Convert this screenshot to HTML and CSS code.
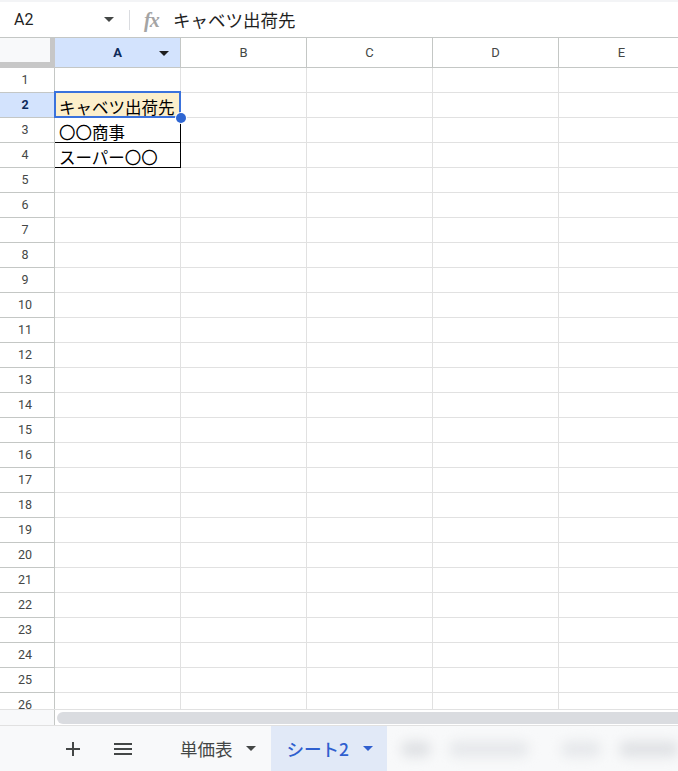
FILE: index.html
```html
<!DOCTYPE html>
<html lang="ja">
<head>
<meta charset="utf-8">
<title>Sheet</title>
<link rel="stylesheet" href="styles.css">
</head>
<body>
<div class="app">
  <div class="topline"></div>
  <div class="formula-bar">
    <div class="namebox">
      <span class="ref">A2</span>
      <svg class="caret" width="10" height="5" viewBox="0 0 10 5"><path d="M0 0h10L5 5z"/></svg>
    </div>
    <div class="sep"></div>
    <span class="fx">fx</span>
    <span class="ftext">キャベツ出荷先</span>
  </div>

  <div class="grid-wrap">
    <div class="sheet">
      <div class="corner"></div>
      <div class="ch sel">A<svg class="col-caret" width="10" height="5" viewBox="0 0 10 5"><path d="M0 0h10L5 5z"/></svg></div>
      <div class="ch">B</div>
      <div class="ch">C</div>
      <div class="ch">D</div>
      <div class="ch">E</div>

      <div class="rh">1</div><div class="c"></div><div class="c"></div><div class="c"></div><div class="c"></div><div class="c"></div>
      <div class="rh sel">2</div><div class="c boxed active">キャベツ出荷先</div><div class="c"></div><div class="c"></div><div class="c"></div><div class="c"></div>
      <div class="rh">3</div><div class="c boxed">〇〇商事</div><div class="c"></div><div class="c"></div><div class="c"></div><div class="c"></div>
      <div class="rh">4</div><div class="c boxed">スーパー〇〇</div><div class="c"></div><div class="c"></div><div class="c"></div><div class="c"></div>
      <div class="rh">5</div><div class="c"></div><div class="c"></div><div class="c"></div><div class="c"></div><div class="c"></div>
      <div class="rh">6</div><div class="c"></div><div class="c"></div><div class="c"></div><div class="c"></div><div class="c"></div>
      <div class="rh">7</div><div class="c"></div><div class="c"></div><div class="c"></div><div class="c"></div><div class="c"></div>
      <div class="rh">8</div><div class="c"></div><div class="c"></div><div class="c"></div><div class="c"></div><div class="c"></div>
      <div class="rh">9</div><div class="c"></div><div class="c"></div><div class="c"></div><div class="c"></div><div class="c"></div>
      <div class="rh">10</div><div class="c"></div><div class="c"></div><div class="c"></div><div class="c"></div><div class="c"></div>
      <div class="rh">11</div><div class="c"></div><div class="c"></div><div class="c"></div><div class="c"></div><div class="c"></div>
      <div class="rh">12</div><div class="c"></div><div class="c"></div><div class="c"></div><div class="c"></div><div class="c"></div>
      <div class="rh">13</div><div class="c"></div><div class="c"></div><div class="c"></div><div class="c"></div><div class="c"></div>
      <div class="rh">14</div><div class="c"></div><div class="c"></div><div class="c"></div><div class="c"></div><div class="c"></div>
      <div class="rh">15</div><div class="c"></div><div class="c"></div><div class="c"></div><div class="c"></div><div class="c"></div>
      <div class="rh">16</div><div class="c"></div><div class="c"></div><div class="c"></div><div class="c"></div><div class="c"></div>
      <div class="rh">17</div><div class="c"></div><div class="c"></div><div class="c"></div><div class="c"></div><div class="c"></div>
      <div class="rh">18</div><div class="c"></div><div class="c"></div><div class="c"></div><div class="c"></div><div class="c"></div>
      <div class="rh">19</div><div class="c"></div><div class="c"></div><div class="c"></div><div class="c"></div><div class="c"></div>
      <div class="rh">20</div><div class="c"></div><div class="c"></div><div class="c"></div><div class="c"></div><div class="c"></div>
      <div class="rh">21</div><div class="c"></div><div class="c"></div><div class="c"></div><div class="c"></div><div class="c"></div>
      <div class="rh">22</div><div class="c"></div><div class="c"></div><div class="c"></div><div class="c"></div><div class="c"></div>
      <div class="rh">23</div><div class="c"></div><div class="c"></div><div class="c"></div><div class="c"></div><div class="c"></div>
      <div class="rh">24</div><div class="c"></div><div class="c"></div><div class="c"></div><div class="c"></div><div class="c"></div>
      <div class="rh">25</div><div class="c"></div><div class="c"></div><div class="c"></div><div class="c"></div><div class="c"></div>
      <div class="rh last">26</div><div class="c"></div><div class="c"></div><div class="c"></div><div class="c"></div><div class="c"></div>
    </div>
  </div>

  <div class="hscroll">
    <div class="hs-left"></div>
    <div class="thumb"></div>
  </div>

  <div class="sheetbar">
    <div class="icon-btn plus">
      <svg width="14" height="14" viewBox="0 0 14 14"><path d="M7 0v14M0 7h14" stroke="#444746" stroke-width="2"/></svg>
    </div>
    <div class="icon-btn menu">
      <svg width="18" height="12" viewBox="0 0 18 12"><path d="M0 1h18M0 6h18M0 11h18" stroke="#444746" stroke-width="2"/></svg>
    </div>
    <div class="tab first">
      <span class="tab-name">単価表</span>
      <svg class="tab-caret" width="10" height="5" viewBox="0 0 10 5"><path d="M0 0h10L5 5z"/></svg>
    </div>
    <div class="tab active">
      <span class="tab-name">シート2</span>
      <svg class="tab-caret" width="10" height="5" viewBox="0 0 10 5"><path d="M0 0h10L5 5z"/></svg>
    </div>
    <div class="blurred">
      <span class="blob b1"></span>
      <span class="blob b2"></span>
      <span class="blob b3"></span>
      <span class="blob b4"></span>
    </div>
  </div>
</div>
</body>
</html>
```

FILE: styles.css
```css
* { box-sizing: border-box; }

html, body {
  margin: 0;
  padding: 0;
  background: #ffffff;
}

body {
  width: 678px;
  height: 771px;
  overflow: hidden;
  font-family: "Roboto", "Liberation Sans", "Noto Sans CJK JP", sans-serif;
  color: #1f1f1f;
}

.app {
  display: flex;
  flex-direction: column;
  width: 678px;
  height: 771px;
  overflow: hidden;
}

.topline {
  height: 2px;
  flex: none;
  background: #f3f4f6;
}

/* formula bar */
.formula-bar {
  flex: none;
  height: 36px;
  display: flex;
  align-items: center;
  border-bottom: 1px solid #c4c7c5;
}

.namebox {
  width: 129px;
  display: flex;
  align-items: center;
  justify-content: space-between;
  padding: 0 15px 0 14px;
}

.ref {
  font-size: 16px;
  color: #1f1f1f;
  font-family: "Roboto", "Liberation Sans", sans-serif;
}

.caret { fill: #444746; }

.sep {
  width: 1px;
  height: 20px;
  background: #dadce0;
}

.fx {
  margin-left: 14px;
  font-family: "Liberation Serif", serif;
  font-style: italic;
  font-weight: bold;
  font-size: 20px;
  color: #a4a4a4;
  width: 17px;
  line-height: 1;
  letter-spacing: -1px;
}

.ftext {
  margin-left: 12px;
  font-family: "Noto Sans CJK JP", sans-serif;
  font-size: 17.5px;
  color: #1f1f1f;
  line-height: 1;
}

/* grid */
.grid-wrap {
  flex: none;
  height: 671px;
  overflow: hidden;
}

.sheet {
  display: grid;
  grid-template-columns: 55px repeat(5, 126px);
  grid-template-rows: 30px;
  grid-auto-rows: 25px;
}

.corner {
  background: #f8f9fa;
  border-right: 5px solid #c7c7c7;
  border-bottom: 6px solid #c7c7c7;
}

.ch {
  position: relative;
  display: flex;
  align-items: center;
  justify-content: center;
  font-family: "Roboto", "Liberation Sans", sans-serif;
  font-size: 13px;
  color: #444746;
  border-right: 1px solid #c4c7c5;
  border-bottom: 1px solid #c4c7c5;
  background: #ffffff;
}

.ch.sel {
  background: #d3e3fd;
  color: #0e2a5a;
  font-weight: bold;
}

.col-caret {
  position: absolute;
  right: 11px;
  top: 13px;
  fill: #1f1f1f;
}

.rh {
  display: flex;
  align-items: center;
  justify-content: center;
  padding: 0 4px 1px 0;
  font-family: "Roboto", "Liberation Sans", sans-serif;
  font-size: 12.5px;
  color: #444746;
  border-right: 1px solid #c4c7c5;
  border-bottom: 1px solid #c4c7c5;
  background: #ffffff;
}

.rh.last {
  align-items: flex-start;
  padding-top: 4px;
}

.rh.sel {
  background: #d3e3fd;
  color: #0e2a5a;
  font-weight: bold;
}

.c {
  position: relative;
  border-right: 1px solid #e1e1e1;
  border-bottom: 1px solid #e1e1e1;
  font-family: "Noto Sans CJK JP", sans-serif;
  font-size: 16.5px;
  line-height: 1;
  color: #000000;
  display: flex;
  align-items: flex-end;
  padding: 0 0 2px 4px;
  white-space: nowrap;
}

.c.boxed {
  border-right: 1px solid #000000;
  border-bottom: 1px solid #000000;
}

.c.active {
  background: #fcefcb;
}

.c.active::after {
  content: "";
  position: absolute;
  left: -1px;
  top: -2px;
  right: -1px;
  bottom: -1px;
  border: 2px solid #3a72dc;
}

.c.active::before {
  content: "";
  position: absolute;
  right: -6px;
  bottom: -6px;
  width: 10px;
  height: 10px;
  border-radius: 50%;
  background: #2f66d2;
  box-shadow: 0 0 0 1px #ffffff;
  z-index: 2;
}

/* horizontal scrollbar */
.hscroll {
  flex: none;
  height: 17px;
  display: flex;
  align-items: center;
  border-top: 1px solid #e1e1e1;
  border-bottom: 1px solid #e1e1e1;
  background: #ffffff;
}

.hs-left {
  width: 55px;
  height: 100%;
  border-right: 1px solid #c4c7c5;
  background: #f8f9fa;
}

.thumb {
  flex: 1;
  height: 12px;
  margin-left: 2px;
  margin-right: -10px;
  border-radius: 6px;
  background: #dadce0;
}

/* sheet tabs */
.sheetbar {
  flex: 1;
  display: flex;
  align-items: stretch;
  background: #f8f9fa;
  overflow: hidden;
}

.icon-btn {
  flex: none;
  display: flex;
  align-items: center;
  justify-content: center;
  width: 22px;
}

.plus { margin-left: 62px; }
.menu { margin-left: 28px; }

.tab {
  flex: none;
  white-space: nowrap;
  display: flex;
  align-items: center;
  gap: 13px;
  padding: 0 15px 0 16px;
  font-family: "Noto Sans CJK JP", sans-serif;
  font-size: 17.5px;
  color: #444746;
}

.tab.first { margin-left: 30px; }

.tab-name { line-height: 1; }

.tab-caret { flex: none; fill: #444746; }

.tab.active {
  background: #e1e9f7;
  color: #2f5fcf;
  font-weight: 500;
  gap: 14px;
  padding: 0 14px 0 16px;
}

.tab.active .tab-caret { fill: #2f5fcf; }

.blurred {
  flex: 1;
  min-width: 0;
  display: flex;
  align-items: center;
  gap: 18px;
  padding-left: 14px;
  filter: blur(6px);
}

.blob {
  flex: none;
  display: block;
  height: 16px;
  border-radius: 8px;
  background: #e6e8eb;
}

.b1 { width: 30px; background: #dfe1e4; }
.b2 { width: 80px; }
.b3 { width: 40px; margin-left: 14px; }
.b4 { width: 60px; background: #e0e2e5; }
```
